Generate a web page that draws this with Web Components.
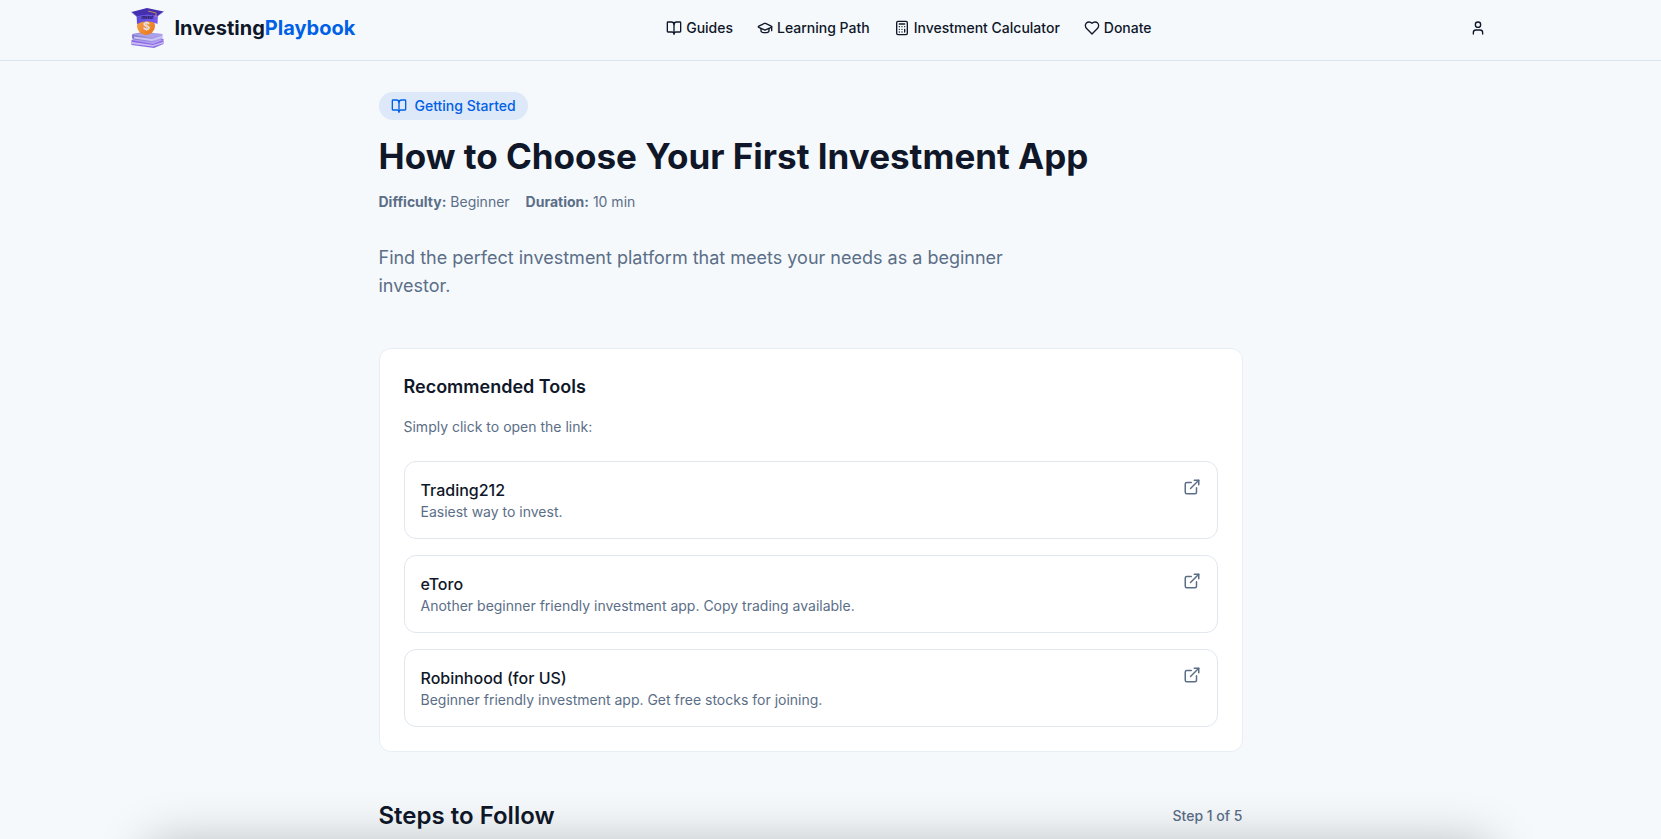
<!DOCTYPE html>
<html lang="en">
<head>
<meta charset="UTF-8">
<meta name="viewport" content="width=device-width, initial-scale=1.0">
<title>How to Choose Your First Investment App | InvestingPlaybook</title>
<style>
    :root {
        --background: #f5f9fc;
        --foreground: #0f1729;
        --muted: #5b6e87;
        --primary: #0060e6;
        --primary-soft: #dde8f8;
        --border: #e1e7ef;
    }
    body {
        margin: 0;
        background: var(--background);
        color: var(--foreground);
        font-family: Inter, "Liberation Sans", sans-serif;
        font-size: 16px;
        line-height: 24px;
        overflow: hidden;
    }
</style>
</head>
<body>
<site-header>
    <nav-link href="#guides" icon="book">Guides</nav-link>
    <nav-link href="#learning-path" icon="cap">Learning Path</nav-link>
    <nav-link href="#calculator" icon="calculator">Investment Calculator</nav-link>
    <nav-link href="#donate" icon="heart">Donate</nav-link>
</site-header>

<guide-page>
    <guide-intro difficulty="Beginner" duration="10 min">
        <span slot="category">Getting Started</span>
        <span slot="title">How to Choose Your First Investment App</span>
        Find the perfect investment platform that meets your needs as a beginner investor.
    </guide-intro>
    <tool-list heading="Recommended Tools" hint="Simply click to open the link:">
        <tool-card href="#trading212" name="Trading212">Easiest way to invest.</tool-card>
        <tool-card href="#etoro" name="eToro">Another beginner friendly investment app. Copy trading available.</tool-card>
        <tool-card href="#robinhood" name="Robinhood (for US)">Beginner friendly investment app. Get free stocks for joining.</tool-card>
    </tool-list>
    <steps-header current="1" total="5">Steps to Follow</steps-header>
</guide-page>

<bottom-sheet></bottom-sheet>

<script>
const ICONS = {
    book: '<path d="M12 7v14"/><path d="M3 18a1 1 0 0 1-1-1V4a1 1 0 0 1 1-1h5a4 4 0 0 1 4 4 4 4 0 0 1 4-4h5a1 1 0 0 1 1 1v13a1 1 0 0 1-1 1h-6a3 3 0 0 0-3 3 3 3 0 0 0-3-3z"/>',
    cap: '<path d="M21.42 10.922a1 1 0 0 0-.019-1.838L12.83 5.18a2 2 0 0 0-1.66 0L2.6 9.08a1 1 0 0 0 0 1.832l8.57 3.908a2 2 0 0 0 1.66 0z"/><path d="M22 10v6"/><path d="M6 12.5V16a6 3 0 0 0 12 0v-3.5"/>',
    calculator: '<rect width="16" height="20" x="4" y="2" rx="2"/><path d="M8 6h8M16 14v4M16 10h.01M12 10h.01M8 10h.01M12 14h.01M8 14h.01M12 18h.01M8 18h.01"/>',
    heart: '<path d="M19 14c1.49-1.46 3-3.21 3-5.5A5.5 5.5 0 0 0 16.5 3c-1.76 0-3 .5-4.5 2-1.5-1.5-2.74-2-4.5-2A5.5 5.5 0 0 0 2 8.5c0 2.3 1.5 4.05 3 5.5l7 7Z"/>',
    user: '<path d="M19 21v-2a4 4 0 0 0-4-4H9a4 4 0 0 0-4 4v2"/><circle cx="12" cy="7" r="4"/>',
    external: '<path d="M15 3h6v6"/><path d="M10 14 21 3"/><path d="M18 13v6a2 2 0 0 1-2 2H5a2 2 0 0 1-2-2V8a2 2 0 0 1 2-2h6"/>'
};

function icon(name, size = 16) {
    return `<svg width="${size}" height="${size}" viewBox="0 0 24 24" fill="none" stroke="currentColor"
        stroke-width="2" stroke-linecap="round" stroke-linejoin="round" aria-hidden="true">${ICONS[name]}</svg>`;
}

class SiteLogo extends HTMLElement {
    constructor() {
        super();
        this.attachShadow({ mode: 'open' }).innerHTML = `
            <style>
                :host { display: block; }
                a {
                    display: flex;
                    align-items: center;
                    gap: 8px;
                    color: inherit;
                    text-decoration: none;
                    font-size: 20px;
                    font-weight: 700;
                    line-height: 28px;
                }
                .accent { color: var(--primary); }
            </style>
            <a href="#home">
                <svg width="40" height="40" viewBox="0 0 40 40" aria-hidden="true">
                    <defs>
                        <linearGradient id="coin" x1="0" y1="0" x2="1" y2="1">
                            <stop offset="0" stop-color="#f9a548"/>
                            <stop offset="1" stop-color="#e8741c"/>
                        </linearGradient>
                        <linearGradient id="band" x1="0" y1="0" x2="1" y2="0">
                            <stop offset="0" stop-color="#5b4bd8"/>
                            <stop offset="1" stop-color="#7a5cf3"/>
                        </linearGradient>
                        <linearGradient id="cover" x1="0" y1="0" x2="1" y2="0">
                            <stop offset="0" stop-color="#8178cf"/>
                            <stop offset="1" stop-color="#b3a1f2"/>
                        </linearGradient>
                    </defs>
                    <path d="M4.500 32 16 29 36.500 31 36.500 36 27 40 4.500 37Z" fill="#8a6ee0"/>
                    <path d="M4.500 32 16 30 36.500 32 26 36Z" fill="#b59df5"/>
                    <path d="M5 34 26 37 36 34 36 35.500 26 38.500 5 36Z" fill="#cbbcf8"/>
                    <path d="M5.500 26Q4 28 5.500 31L25 34.500 35.500 31V26L16 24Z" fill="url(#cover)"/>
                    <path d="M5.500 26.500 15 25 36 26 25 30Z" fill="#a9a2e8"/>
                    <path d="M7 28.500 25 31 35 28V30L25 33 7 30.500Z" fill="#c9c7f2"/>
                    <circle cx="19" cy="18" r="9" fill="url(#coin)"/>
                    <text x="19.500" y="22" text-anchor="middle" font-family="Inter, sans-serif" font-size="11" font-weight="700" fill="#e6e2ea">$</text>
                    <path d="M9.500 6H31L30.500 16Q20 10.500 10 16Z" fill="url(#band)"/>
                    <path d="M4.500 4 20 0 36.500 3.500 30.500 8Q20 6 10 8.500Z" fill="#4430ae"/>
                    <path d="M4.500 4 10 8.500Q20 6 30.500 8L36.500 3.500" fill="none" stroke="#6c5ae6" stroke-width=".8"/>
                    <path d="M21 3 29 5V9" fill="none" stroke="#e39b4d" stroke-width=".8"/>
                    <text x="20.500" y="10.500" text-anchor="middle" font-family="Inter, sans-serif" font-size="4" font-weight="700" fill="#17113f">Invest</text>
                </svg>
                <span>Investing<span class="accent">Playbook</span></span>
            </a>
        `;
    }
}
customElements.define('site-logo', SiteLogo);

class NavLink extends HTMLElement {
    constructor() {
        super();
        this.attachShadow({ mode: 'open' }).innerHTML = `
            <style>
                :host { display: block; }
                a {
                    display: flex;
                    align-items: center;
                    gap: 4px;
                    color: inherit;
                    text-decoration: none;
                    font-size: 14px;
                    font-weight: 500;
                    line-height: 20px;
                    white-space: nowrap;
                }
            </style>
            <a href="${this.getAttribute('href')}">${icon(this.getAttribute('icon'))}<span><slot></slot></span></a>
        `;
    }
}
customElements.define('nav-link', NavLink);

class SiteHeader extends HTMLElement {
    constructor() {
        super();
        this.attachShadow({ mode: 'open' }).innerHTML = `
            <style>
                :host {
                    display: block;
                    padding: 0 40px 4px 0;
                    border-bottom: 1px solid #dce4ef;
                }
                header {
                    display: flex;
                    align-items: center;
                    justify-content: space-between;
                    box-sizing: border-box;
                    max-width: 1400px;
                    height: 56px;
                    margin: 0 auto;
                    padding: 0 16px;
                }
                nav {
                    display: flex;
                    gap: 24px;
                }
                button {
                    display: grid;
                    place-items: center;
                    width: 32px;
                    height: 32px;
                    padding: 0;
                    border: 0;
                    border-radius: 6px;
                    background: none;
                    color: inherit;
                }
            </style>
            <header>
                <site-logo></site-logo>
                <nav><slot></slot></nav>
                <button type="button" aria-label="Account">${icon('user')}</button>
            </header>
        `;
    }
}
customElements.define('site-header', SiteHeader);

class GuidePage extends HTMLElement {
    constructor() {
        super();
        this.attachShadow({ mode: 'open' }).innerHTML = `
            <style>
                :host {
                    display: block;
                    padding: 31px 40px 32px 0;
                }
                main {
                    display: flex;
                    flex-direction: column;
                    gap: 48px;
                    box-sizing: border-box;
                    max-width: 896px;
                    margin: 0 auto;
                    padding: 0 16px;
                }
            </style>
            <main><slot></slot></main>
        `;
    }
}
customElements.define('guide-page', GuidePage);

class GuideIntro extends HTMLElement {
    constructor() {
        super();
        this.attachShadow({ mode: 'open' }).innerHTML = `
            <style>
                :host { display: block; }
                .badge {
                    display: inline-flex;
                    align-items: center;
                    gap: 8px;
                    padding: 4px 12px;
                    border-radius: 14px;
                    background: var(--primary-soft);
                    color: var(--primary);
                    font-size: 14px;
                    font-weight: 500;
                    line-height: 20px;
                    vertical-align: top;
                }
                h1 {
                    margin: 16px 0;
                    font-size: 35px;
                    font-weight: 700;
                    line-height: 40px;
                }
                .meta {
                    display: flex;
                    gap: 16px;
                    color: var(--muted);
                    font-size: 14px;
                    line-height: 20px;
                }
                p {
                    max-width: 672px;
                    margin: 32px 0 0;
                    color: var(--muted);
                    font-size: 18px;
                    line-height: 28px;
                }
            </style>
            <div class="badge">${icon('book')}<slot name="category"></slot></div>
            <h1><slot name="title"></slot></h1>
            <div class="meta">
                <span><strong>Difficulty:</strong> ${this.getAttribute('difficulty')}</span>
                <span><strong>Duration:</strong> ${this.getAttribute('duration')}</span>
            </div>
            <p><slot></slot></p>
        `;
    }
}
customElements.define('guide-intro', GuideIntro);

class ToolList extends HTMLElement {
    constructor() {
        super();
        this.attachShadow({ mode: 'open' }).innerHTML = `
            <style>
                :host {
                    display: block;
                    padding: 24px;
                    border: 1px solid #e9eef5;
                    border-radius: 12px;
                    background: white;
                }
                h2 {
                    margin: 0;
                    font-size: 18px;
                    font-weight: 600;
                    line-height: 28px;
                }
                p {
                    margin: 16px 0 24px;
                    color: var(--muted);
                    font-size: 14px;
                    line-height: 20px;
                }
                .tools {
                    display: grid;
                    gap: 16px;
                }
            </style>
            <h2>${this.getAttribute('heading')}</h2>
            <p>${this.getAttribute('hint')}</p>
            <div class="tools"><slot></slot></div>
        `;
    }
}
customElements.define('tool-list', ToolList);

class ToolCard extends HTMLElement {
    constructor() {
        super();
        this.attachShadow({ mode: 'open' }).innerHTML = `
            <style>
                :host { display: block; }
                a {
                    display: flex;
                    align-items: flex-start;
                    justify-content: space-between;
                    padding: 16px;
                    border: 1px solid var(--border);
                    border-radius: 12px;
                    color: var(--muted);
                    font-size: 14px;
                    line-height: 20px;
                    text-decoration: none;
                }
                h3 {
                    margin: 0;
                    color: var(--foreground);
                    font-size: 16px;
                    font-weight: 500;
                    line-height: 24px;
                }
            </style>
            <a href="${this.getAttribute('href')}">
                <div>
                    <h3>${this.getAttribute('name')}</h3>
                    <slot></slot>
                </div>
                ${icon('external', 18)}
            </a>
        `;
    }
}
customElements.define('tool-card', ToolCard);

class StepsHeader extends HTMLElement {
    constructor() {
        super();
        this.attachShadow({ mode: 'open' }).innerHTML = `
            <style>
                :host {
                    display: flex;
                    align-items: center;
                    justify-content: space-between;
                }
                h2 {
                    margin: 0;
                    font-size: 24px;
                    font-weight: 600;
                    line-height: 32px;
                }
                span {
                    color: var(--muted);
                    font-size: 14px;
                    font-weight: 500;
                    line-height: 20px;
                }
            </style>
            <h2><slot></slot></h2>
            <span>Step ${this.getAttribute('current')} of ${this.getAttribute('total')}</span>
        `;
    }
}
customElements.define('steps-header', StepsHeader);

class BottomSheet extends HTMLElement {
    constructor() {
        super();
        this.attachShadow({ mode: 'open' }).innerHTML = `
            <style>
                :host {
                    position: fixed;
                    top: 100%;
                    left: 0;
                    right: 24px;
                    pointer-events: none;
                }
                div {
                    max-width: 1344px;
                    height: 120px;
                    margin: 4px auto 0;
                    border-radius: 16px;
                    box-shadow: 0 0 50px rgba(0, 0, 0, 0.25);
                }
            </style>
            <div></div>
        `;
    }
}
customElements.define('bottom-sheet', BottomSheet);
</script>
</body>
</html>
